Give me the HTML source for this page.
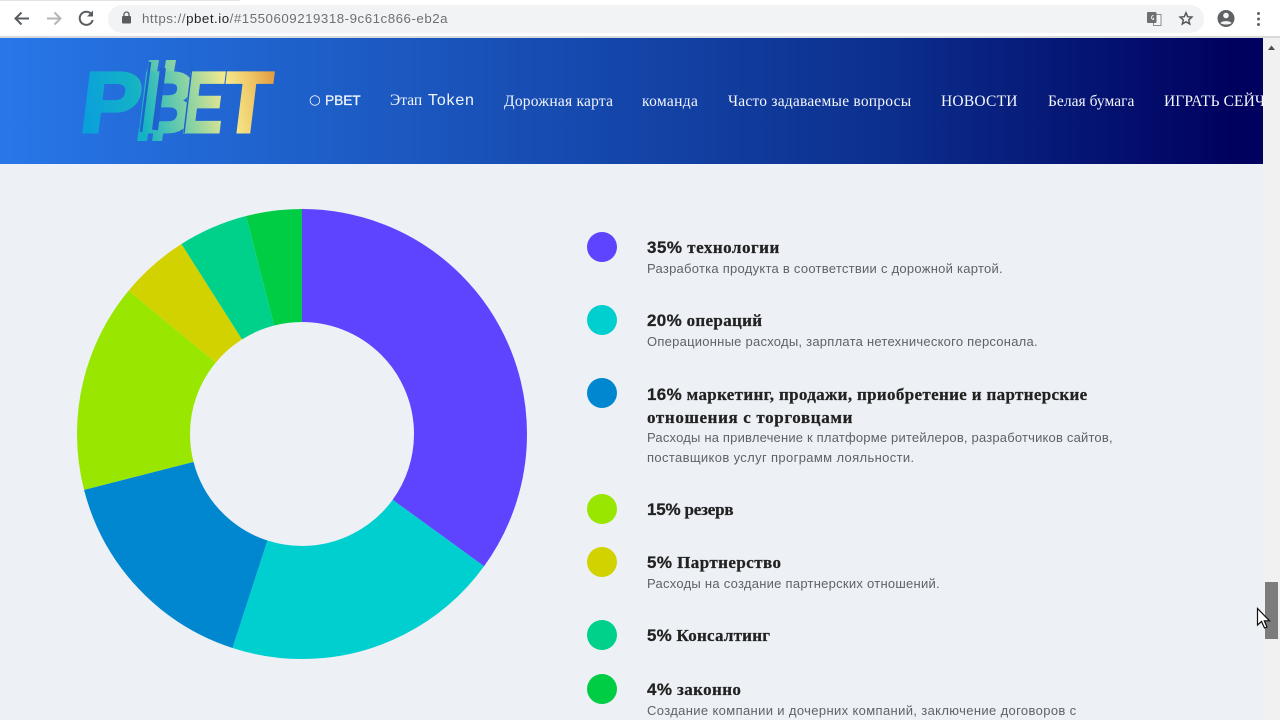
<!DOCTYPE html>
<html lang="ru">
<head>
<meta charset="utf-8">
<title>PBET</title>
<style>
html,body{margin:0;padding:0;width:1280px;height:720px;overflow:hidden;background:#edf0f5;}
body{position:relative;font-family:"Liberation Sans",sans-serif;}
.abs,.n,.h,.d,.dot{position:absolute;white-space:nowrap;}
#bar{position:absolute;left:0;top:0;width:1280px;height:37px;background:#fff;}
#strip{position:absolute;left:0;top:0;width:240px;height:1px;background:#e4e4e4;}
#line{position:absolute;left:0;top:36px;width:1280px;height:2px;background:#d8d9da;}
#url{position:absolute;left:108px;top:5px;width:1096px;height:28px;border-radius:14px;background:#f1f3f4;}
#urltext{position:absolute;left:142px;top:10px;font-size:13.3px;line-height:17px;letter-spacing:.52px;color:#6d7072;white-space:nowrap;}
#urltext b{font-weight:400;color:#222;}
#head{position:absolute;left:0;top:38px;width:1263px;height:126px;background:linear-gradient(90deg,#2877e8 0%,#1a55bc 35%,#0c2f8e 70%,#00005e 98%);overflow:hidden;}
.n{top:55px;font-family:"Liberation Serif",serif;font-size:15.5px;line-height:18px;color:#f2f5fb;}
.s{font-family:"Liberation Sans",sans-serif;}
#sb{position:absolute;left:1263px;top:38px;width:17px;height:682px;background:#f1f1f1;}
#thumb{position:absolute;left:1265px;top:582px;width:13px;height:57px;background:#7c7c7c;}
.dot{left:587px;width:30px;height:30px;border-radius:50%;}
.h{left:647px;font-family:"Liberation Serif",serif;font-weight:700;font-size:17px;line-height:23px;color:#222;-webkit-text-stroke:.25px #222;}
.h span{font-family:"Liberation Sans",sans-serif;}
.d{left:647px;font-size:13px;line-height:20px;color:#5f6368;letter-spacing:.28px;}
</style>
</head>
<body>
<div id="bar"></div>
<div id="strip"></div>
<div id="line"></div>
<div id="url"></div>

<svg class="abs" style="left:0;top:0" width="1280" height="38" viewBox="0 0 1280 38">
  <path d="M29 18.500H16M21.500 12.500L15.500 18.500L21.500 24.500" fill="none" stroke="#5a5d60" stroke-width="2"/>
  <path d="M47 18.500H60M54.500 12.500L60.500 18.500L54.500 24.500" fill="none" stroke="#b4b6b8" stroke-width="2"/>
  <path d="M91.500 14.200A6.600 6.600 0 1 0 92.700 20" fill="none" stroke="#5a5d60" stroke-width="2"/>
  <path d="M93 10.500V16.500H87Z" fill="#5a5d60"/>
  <rect x="122" y="16" width="9" height="7.500" rx="1" fill="#5a5d60"/>
  <path d="M124 16.500V14.500A2.500 2.500 0 0 1 129 14.500V16.500" fill="none" stroke="#5a5d60" stroke-width="1.300"/>
  <rect x="1153.500" y="14.500" width="7.500" height="11" fill="#f5f6f6" stroke="#8b8e91"/>
  <rect x="1147" y="12" width="9.500" height="11" rx="1" fill="#6d7073"/>
  <path d="M1153.500 15.500A2 2 0 1 0 1153.500 19.500V17.800" fill="none" stroke="#eee" stroke-width="1"/>
  <path d="M1186 12.800L1187.700 16.700L1191.900 17.100L1188.700 19.900L1189.700 24L1186 21.800L1182.300 24L1183.300 19.900L1180.100 17.100L1184.300 16.700Z" fill="none" stroke="#55585b" stroke-width="1.500"/>
  <circle cx="1226" cy="18.500" r="8.500" fill="#5f6265"/>
  <circle cx="1226" cy="15.500" r="2.800" fill="#f4f5f6"/>
  <path d="M1220.500 23C1222 20.500 1230 20.500 1231.500 23C1230 25 1222 25 1220.500 23Z" fill="#f4f5f6"/>
  <circle cx="1258.500" cy="13.500" r="1.500" fill="#5f6265"/>
  <circle cx="1258.500" cy="19" r="1.500" fill="#5f6265"/>
  <circle cx="1258.500" cy="24.500" r="1.500" fill="#5f6265"/>
</svg>
<div id="urltext">https://<b>pbet.io</b>/#1550609219318-9c61c866-eb2a</div>

<div id="head">
  <svg class="abs" style="left:81px;top:18px" width="196" height="88" viewBox="0 0 196 88">
    <defs>
      <linearGradient id="lg" gradientUnits="userSpaceOnUse" x1="5" y1="72" x2="192" y2="14">
        <stop offset="0" stop-color="#0aa0dc"/>
        <stop offset=".28" stop-color="#14b3c4"/>
        <stop offset=".5" stop-color="#7fd0a6"/>
        <stop offset=".72" stop-color="#f4e98c"/>
        <stop offset=".84" stop-color="#f0c868"/>
        <stop offset="1" stop-color="#dc8f36"/>
      </linearGradient>
    </defs>
    <g fill="url(#lg)" stroke="url(#lg)" stroke-width="3" font-family="Liberation Sans" font-weight="700" font-size="86">
      <path stroke="none" d="M68 4H78L76 16H66ZM85 4H95L93 16H83ZM58 72H68L66 85H56ZM73 72H83L81 85H71Z"/>
      <g transform="translate(0 76) skewX(-7) translate(0 -76)">
        <text x="-3" y="76" textLength="60" lengthAdjust="spacingAndGlyphs">P</text>
        <text x="99" y="76" textLength="41" lengthAdjust="spacingAndGlyphs">E</text>
        <text x="139" y="76" textLength="47" lengthAdjust="spacingAndGlyphs">T</text>
        <text x="54" y="76" textLength="56" lengthAdjust="spacingAndGlyphs">B</text>
      </g>
      <path d="M60 76L69 6" fill="none" stroke="#1f62cf" stroke-width="2.500"/>
      <path d="M74 74L82 12" fill="none" stroke="#1f62cf" stroke-width="6"/>
      <path d="M103 77L111 10" fill="none" stroke="#1f62cf" stroke-width="1.500"/>
    </g>
  </svg>
  <div class="n" style="left:309px;top:53px;font-family:'DejaVu Sans',sans-serif;font-size:13.500px">○</div>
  <div class="n s" style="left:325px;top:54px;font-size:13.800px;letter-spacing:-.1px;-webkit-text-stroke:.25px #f2f5fb">PBET</div>
  <div class="n" style="left:390px;top:54px">Этап <span class="s" style="font-size:16px;letter-spacing:.8px;margin-left:2px">Token</span></div>
  <div class="n" style="left:504px;letter-spacing:.24px">Дорожная карта</div>
  <div class="n" style="left:642px;letter-spacing:.33px">команда</div>
  <div class="n" style="left:728px;letter-spacing:.22px">Часто задаваемые вопросы</div>
  <div class="n" style="left:941px;letter-spacing:.23px">НОВОСТИ</div>
  <div class="n" style="left:1048px;letter-spacing:.03px">Белая бумага</div>
  <div class="n" style="left:1164px;letter-spacing:.1px">ИГРАТЬ СЕЙЧАС</div>
</div>

<div id="sb"></div>
<svg class="abs" style="left:1263px;top:38px" width="17" height="20"><path d="M5 12L8.500 7.500L12 12Z" fill="#505050"/></svg>
<div id="thumb"></div>

<svg class="abs" style="left:0;top:164px" width="560" height="556" viewBox="0 164 560 556">
  <g fill="none" stroke-width="113" transform="rotate(-90 302 434)">
    <circle cx="302" cy="434" r="168.500" pathLength="100" stroke="#5f44ff" stroke-dasharray="35 65" stroke-dashoffset="0"/>
    <circle cx="302" cy="434" r="168.500" pathLength="100" stroke="#00cfcf" stroke-dasharray="20 80" stroke-dashoffset="-35"/>
    <circle cx="302" cy="434" r="168.500" pathLength="100" stroke="#0087d0" stroke-dasharray="16 84" stroke-dashoffset="-55"/>
    <circle cx="302" cy="434" r="168.500" pathLength="100" stroke="#99e600" stroke-dasharray="15 85" stroke-dashoffset="-71"/>
    <circle cx="302" cy="434" r="168.500" pathLength="100" stroke="#d2d200" stroke-dasharray="5 95" stroke-dashoffset="-86"/>
    <circle cx="302" cy="434" r="168.500" pathLength="100" stroke="#00d18a" stroke-dasharray="5 95" stroke-dashoffset="-91"/>
    <circle cx="302" cy="434" r="168.500" pathLength="100" stroke="#00cc44" stroke-dasharray="4 96" stroke-dashoffset="-96"/>
  </g>
</svg>

<div class="dot" style="top:232px;background:#5f44ff"></div>
<div class="h" style="top:236px;letter-spacing:.5px"><span>35%</span> технологии</div>
<div class="d" style="top:259px;letter-spacing:.26px">Разработка продукта в соответствии с дорожной картой.</div>

<div class="dot" style="top:305px;background:#00cfcf"></div>
<div class="h" style="top:309px;letter-spacing:.33px"><span>20%</span> операций</div>
<div class="d" style="top:332px;letter-spacing:.245px">Операционные расходы, зарплата нетехнического персонала.</div>

<div class="dot" style="top:378px;background:#0087d0"></div>
<div class="h" style="top:383px;letter-spacing:.34px"><span>16%</span> маркетинг, продажи, приобретение и партнерские</div>
<div class="h" style="top:406px;letter-spacing:.64px">отношения с торговцами</div>
<div class="d" style="top:428px;letter-spacing:.19px">Расходы на привлечение к платформе ритейлеров, разработчиков сайтов,</div>
<div class="d" style="top:448px;letter-spacing:.36px">поставщиков услуг программ лояльности.</div>

<div class="dot" style="top:494px;background:#99e600"></div>
<div class="h" style="top:498px;letter-spacing:-.2px"><span>15%</span> резерв</div>

<div class="dot" style="top:547px;background:#d2d200"></div>
<div class="h" style="top:551px;letter-spacing:.43px"><span>5%</span> Партнерство</div>
<div class="d" style="top:574px;letter-spacing:.26px">Расходы на создание партнерских отношений.</div>

<div class="dot" style="top:620px;background:#00d18a"></div>
<div class="h" style="top:624px;letter-spacing:.23px"><span>5%</span> Консалтинг</div>

<div class="dot" style="top:674px;background:#00cc44"></div>
<div class="h" style="top:678px;letter-spacing:.4px"><span>4%</span> законно</div>
<div class="d" style="top:701px;letter-spacing:.36px">Создание компании и дочерних компаний, заключение договоров с</div>

<svg class="abs" style="left:1255px;top:607px" width="18" height="24" viewBox="0 0 18 24">
  <path d="M2.500 1.500V18L6.500 14.500L9.500 21L12 20L9.300 13.800H14.500Z" fill="#fff" stroke="#111" stroke-width="1.200"/>
</svg>
</body>
</html>
